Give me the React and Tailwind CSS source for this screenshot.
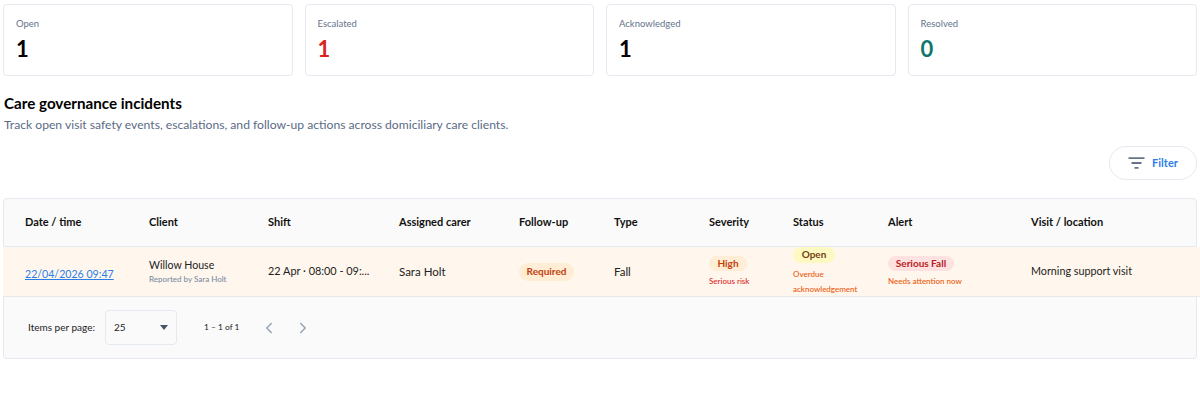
import React from "react";
import { ChevronLeft, ChevronRight } from "lucide-react";

function Card({ label, value, color }) {
  return (
    <div className="flex-1 h-[72px] rounded-[4px] border border-[#e5e9f0] bg-white pl-[12px] pt-[11px]">
      <div className="text-[9.5px] leading-[15px] text-[#64748b]">{label}</div>
      <div className={`mt-[3px] text-[22px] leading-[30px] font-bold ${color}`}>{value}</div>
    </div>
  );
}
const heads = [
  ["Date / time", "w-[145px] pl-[21px]"],
  ["Client", "w-[119px]"],
  ["Shift", "w-[131px]"],
  ["Assigned carer", "w-[120px]"],
  ["Follow-up", "w-[95px]"],
  ["Type", "w-[95px]"],
  ["Severity", "w-[84px]"],
  ["Status", "w-[95px]"],
  ["Alert", "w-[143px]"],
  ["Visit / location", "flex-1"],
];
function Pill({ className, children }) {
  return <span className={`flex items-center justify-center rounded-full text-[10px] font-bold ${className}`}>{children}</span>;
}
export default function App() {
  return (
    <div className="relative w-[1200px] h-[420px] overflow-hidden bg-white font-['Lato','Noto_Sans',sans-serif] text-[#1a1a1a]">
      <div className="flex gap-[12px] pl-[3px] pr-[3px] pt-[4px]">
        <Card label="Open" value="1" color="text-black" />
        <Card label="Escalated" value="1" color="text-[#dc1f1f]" />
        <Card label="Acknowledged" value="1" color="text-black" />
        <Card label="Resolved" value="0" color="text-[#0f766e]" />
      </div>
      <h2 className="ml-[4px] mt-[17px] text-[15.2px] leading-[20px] font-bold text-black">Care governance incidents</h2>
      <p className="ml-[4px] mt-[3px] text-[12.15px] leading-[18px] text-[#5a6b85]">Track open visit safety events, escalations, and follow-up actions across domiciliary care clients.</p>
      <div className="mr-[3px] mt-[12px] flex justify-end">
        <button className="flex h-[34px] w-[88px] items-center justify-center gap-[7px] rounded-full border border-[#e5e9f0] bg-white text-[11px] font-bold text-[#2b7de9]">
          <svg width="17" height="12" viewBox="0 0 17 12" fill="none" stroke="#64748b" strokeWidth="1.8"><path d="M0.5 1.2h16M3.5 6h10M6.5 10.8h4" /></svg>
          Filter
        </button>
      </div>
      <div className="ml-[3px] mt-[18px] w-[1197px]">
        <div className="flex h-[49px] w-[1194px] items-center rounded-t-[4px] border border-[#e5e9f0] bg-[#fafafa] text-[11px] font-bold text-[#111]">
          {heads.map(([h, c]) => <div key={h} className={c}>{h}</div>)}
        </div>
        <div className="flex h-[50px] w-[1197px] items-center border-b border-[#e8e8e8] bg-[#fff7ed] pl-px text-[#222]">
          <div className="w-[145px] pl-[21px]"><a className="text-[10.6px] text-[#2b7de9] underline">22/04/2026 09:47</a></div>
          <div className="w-[119px]">
            <div className="text-[10.6px] leading-[14px]">Willow House</div>
            <div className="mt-[2px] text-[8px] leading-[11px] font-medium text-[#7b8aa3]">Reported by Sara Holt</div>
          </div>
          <div className="w-[131px] text-[10.9px]">22 Apr · 08:00 - 09:...</div>
          <div className="w-[120px] text-[11.5px]">Sara Holt</div>
          <div className="w-[95px]"><Pill className="h-[18px] w-[55px] bg-[#ffedd5] text-[#c2410c]">Required</Pill></div>
          <div className="w-[95px] text-[11.5px]">Fall</div>
          <div className="w-[84px]">
            <Pill className="h-[15px] w-[38px] bg-[#ffedd5] text-[#c2410c]">High</Pill>
            <div className="mt-[5px] text-[8px] leading-[11px] font-medium text-[#dc2626]">Serious risk</div>
          </div>
          <div className="w-[95px]">
            <Pill className="h-[16px] w-[42px] bg-[#fef9c3] text-[#713f12]">Open</Pill>
            <div className="mt-[4px] text-[8px] leading-[15px] font-medium text-[#ea580c]">Overdue<br />acknowledgement</div>
          </div>
          <div className="w-[143px]">
            <Pill className="h-[15px] w-[66px] bg-[#fee2e2] text-[#b91c1c]">Serious Fall</Pill>
            <div className="mt-[5px] text-[8px] leading-[11px] font-medium text-[#ea580c]">Needs attention now</div>
          </div>
          <div className="flex-1 text-[10.75px]">Morning support visit</div>
        </div>
        <div className="flex h-[62px] w-[1194px] items-center rounded-b-[4px] border-x border-b border-[#e5e9f0] bg-[#fafafa] pl-[24px] text-[#222]">
          <span className="w-[77px] text-[10px]">Items per page:</span>
          <div className="flex h-[35px] w-[72px] items-center justify-between rounded-[4px] border border-[#e5e9f0] pl-[8px] pr-[8px] text-[10px]">
            25
            <svg width="8" height="5" viewBox="0 0 8 5"><path d="M0 0h8L4 5z" fill="#475569" /></svg>
          </div>
          <span className="ml-[27px] w-[34px] whitespace-nowrap text-[8.4px]">1 – 1 of 1</span>
          <ChevronLeft className="ml-[22px]" size={18} color="#94a3b8" />
          <ChevronRight className="ml-[16px]" size={18} color="#94a3b8" />
        </div>
      </div>
    </div>
  );
}
